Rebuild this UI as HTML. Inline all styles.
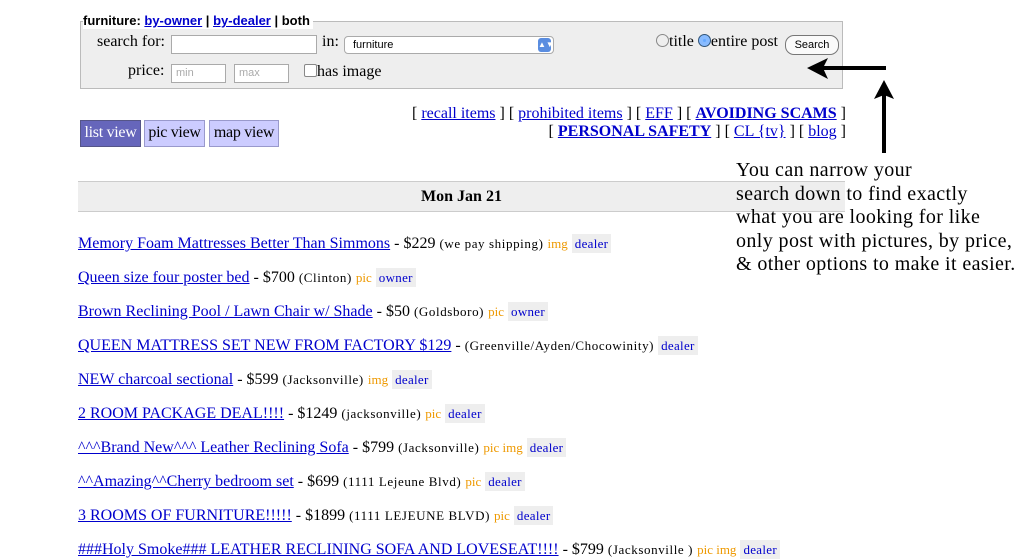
<!DOCTYPE html>
<html><head><meta charset="utf-8"><style>
body{margin:0;width:1028px;height:558px;background:#fff;font-family:"Liberation Serif",serif;position:relative;overflow:hidden;color:#000}
.a{position:absolute;white-space:nowrap}
a{color:#00c;text-decoration:underline}
.box{position:absolute;left:80px;top:21px;width:763px;height:68px;background:#eee;border:1px solid #bbb;box-sizing:border-box}
.sans{font-family:"Liberation Sans",sans-serif}
.inp{position:absolute;background:#fff;border:1px solid #aaa;box-sizing:border-box}
.btn{position:absolute;background:#ccf;border:1px solid #99c;font-size:16px;line-height:24px;box-sizing:border-box;height:27px;text-align:center;white-space:nowrap;overflow:hidden;letter-spacing:-0.3px}
.row{position:absolute;left:78px;font-size:16px;white-space:nowrap}
.s{font-size:13px;letter-spacing:0.6px}
.o{color:#e90;font-size:13px}
.t{background:#eee;color:#00c;font-size:13px;padding:2px 3px;letter-spacing:0.3px}
</style></head><body>
<div class="box"></div>
<div class="a sans" style="left:83px;top:13px;font-size:13px;font-weight:bold;background:#fff;padding-right:3px;line-height:16px">furniture: <a href="#">by-owner</a> | <a href="#">by-dealer</a> | both</div>
<div class="a" style="left:97px;top:33px;font-size:16px">search for:</div>
<div class="inp" style="left:171px;top:35px;width:146px;height:19px"></div>
<div class="a" style="left:322px;top:33px;font-size:16px">in:</div>
<div class="inp sans" style="left:344px;top:36px;width:210px;height:18px;border-radius:4px;font-size:11px;padding-left:8px;line-height:16px">furniture<span style="position:absolute;right:2px;top:1px;width:13px;height:14px;background:#5a8de0;border-radius:3px;color:#fff;font-size:8px;line-height:14px;text-align:center">▲▼</span></div>
<div class="a" style="left:656px;top:33px;font-size:16px"><span style="display:inline-block;width:11px;height:11px;border:1px solid #888;border-radius:50%;vertical-align:-1px"></span>title <span style="display:inline-block;width:11px;height:11px;border:1px solid #357;border-radius:50%;background:#6af;vertical-align:-1px;box-shadow:inset 0 0 0 4px #8bf"></span>entire post</div>
<div class="a sans" style="left:785px;top:35px;width:52px;height:18px;border:1px solid #777;border-radius:9px;background:#fafafa;font-size:11px;line-height:18px;text-align:center">Search</div>
<div class="a" style="left:128px;top:62px;font-size:16px">price:</div>
<div class="inp sans" style="left:171px;top:64px;width:55px;height:19px;font-size:11px;color:#aaa;padding-left:4px;line-height:17px">min</div>
<div class="inp sans" style="left:234px;top:64px;width:55px;height:19px;font-size:11px;color:#aaa;padding-left:4px;line-height:17px">max</div>
<div class="a" style="left:304px;top:63px;font-size:16px"><span style="display:inline-block;width:11px;height:11px;border:1px solid #888;border-radius:2px;background:#fff;vertical-align:-1px"></span>has image</div>

<div class="a" style="right:182px;top:105px;font-size:16px;text-align:right;line-height:18px">[ <a href="#">recall items</a> ] [ <a href="#">prohibited items</a> ] [ <a href="#">EFF</a> ] [ <a href="#"><b>AVOIDING SCAMS</b></a> ]<br>[ <a href="#"><b>PERSONAL SAFETY</b></a> ] [ <a href="#">CL {tv}</a> ] [ <a href="#">blog</a> ]</div>

<div class="btn" style="left:80px;top:120px;width:61px;background:#66b;color:#fff;border-color:#558">list view</div>
<div class="btn" style="left:144px;top:120px;width:61px">pic view</div>
<div class="btn" style="left:209px;top:120px;width:70px">map view</div>

<div class="a" style="left:78px;top:181px;width:767px;height:31px;background:#eee;border-top:1px solid #ccc;border-bottom:1px solid #ccc;box-sizing:border-box;text-align:center;font-weight:bold;font-size:16px;line-height:29px">Mon Jan 21</div>

<div class="row" style="top:235px"><a href="#">Memory Foam Mattresses Better Than Simmons</a> - $229 <span class="s">(we pay shipping)</span> <span class="o">img</span> <span class="t">dealer</span></div>
<div class="row" style="top:269px"><a href="#">Queen size four poster bed</a> - $700 <span class="s">(Clinton)</span> <span class="o">pic</span> <span class="t">owner</span></div>
<div class="row" style="top:303px"><a href="#">Brown Reclining Pool / Lawn Chair w/ Shade</a> - $50 <span class="s">(Goldsboro)</span> <span class="o">pic</span> <span class="t">owner</span></div>
<div class="row" style="top:337px"><a href="#">QUEEN MATTRESS SET NEW FROM FACTORY $129</a> - <span class="s">(Greenville/Ayden/Chocowinity)</span> <span class="t">dealer</span></div>
<div class="row" style="top:371px"><a href="#">NEW charcoal sectional</a> - $599 <span class="s">(Jacksonville)</span> <span class="o">img</span> <span class="t">dealer</span></div>
<div class="row" style="top:405px"><a href="#">2 ROOM PACKAGE DEAL!!!!</a> - $1249 <span class="s">(jacksonville)</span> <span class="o">pic</span> <span class="t">dealer</span></div>
<div class="row" style="top:439px"><a href="#">^^^Brand New^^^ Leather Reclining Sofa</a> - $799 <span class="s">(Jacksonville)</span> <span class="o">pic img</span> <span class="t">dealer</span></div>
<div class="row" style="top:473px"><a href="#">^^Amazing^^Cherry bedroom set</a> - $699 <span class="s">(1111 Lejeune Blvd)</span> <span class="o">pic</span> <span class="t">dealer</span></div>
<div class="row" style="top:507px"><a href="#">3 ROOMS OF FURNITURE!!!!!</a> - $1899 <span class="s">(1111 LEJEUNE BLVD)</span> <span class="o">pic</span> <span class="t">dealer</span></div>
<div class="row" style="top:541px"><a href="#">###Holy Smoke### LEATHER RECLINING SOFA AND LOVESEAT!!!!</a> - $799 <span class="s">(Jacksonville )</span> <span class="o">pic img</span> <span class="t">dealer</span></div>

<div class="a" style="left:846px;top:183px;width:182px;height:100px;background:#fff"></div>
<div class="a" style="left:736px;top:159px;font-size:20px;letter-spacing:0.4px;line-height:23.5px">You can narrow your<br>search down to find exactly<br>what you are looking for like<br>only post with pictures, by price,<br>&amp; other options to make it easier.</div>

<svg class="a" style="left:800px;top:55px" width="100" height="100">
<line x1="20" y1="13" x2="86" y2="13" stroke="#000" stroke-width="4"/>
<polygon points="7,13 28,3 23,13 28,24" fill="#000"/>
<line x1="84" y1="35" x2="84" y2="98" stroke="#000" stroke-width="4"/>
<polygon points="84,25 74,44 84,40 94,44" fill="#000"/>
</svg>
</body></html>
